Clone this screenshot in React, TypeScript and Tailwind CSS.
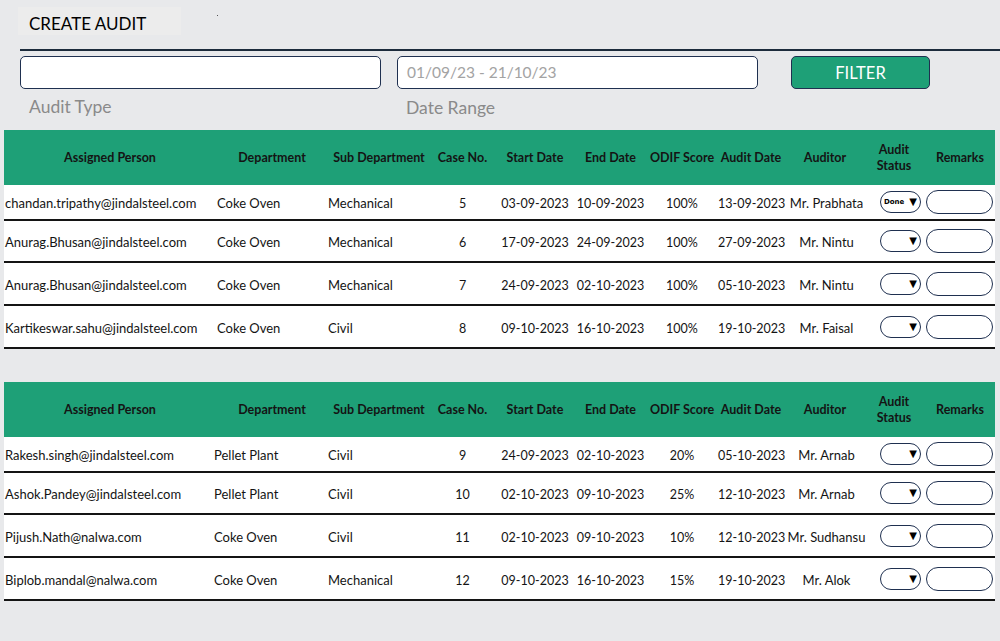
import React from "react";

type Row = {
  person: string;
  dept: string;
  sub: string;
  caseNo: string;
  start: string;
  end: string;
  odif: string;
  audit: string;
  auditor: string;
  status?: string;
};

const table1: Row[] = [
  { person: "chandan.tripathy@jindalsteel.com", dept: "Coke Oven", sub: "Mechanical", caseNo: "5", start: "03-09-2023", end: "10-09-2023", odif: "100%", audit: "13-09-2023", auditor: "Mr. Prabhata", status: "Done" },
  { person: "Anurag.Bhusan@jindalsteel.com", dept: "Coke Oven", sub: "Mechanical", caseNo: "6", start: "17-09-2023", end: "24-09-2023", odif: "100%", audit: "27-09-2023", auditor: "Mr. Nintu" },
  { person: "Anurag.Bhusan@jindalsteel.com", dept: "Coke Oven", sub: "Mechanical", caseNo: "7", start: "24-09-2023", end: "02-10-2023", odif: "100%", audit: "05-10-2023", auditor: "Mr. Nintu" },
  { person: "Kartikeswar.sahu@jindalsteel.com", dept: "Coke Oven", sub: "Civil", caseNo: "8", start: "09-10-2023", end: "16-10-2023", odif: "100%", audit: "19-10-2023", auditor: "Mr. Faisal" },
];

const table2: Row[] = [
  { person: "Rakesh.singh@jindalsteel.com", dept: "Pellet Plant", sub: "Civil", caseNo: "9", start: "24-09-2023", end: "02-10-2023", odif: "20%", audit: "05-10-2023", auditor: "Mr. Arnab" },
  { person: "Ashok.Pandey@jindalsteel.com", dept: "Pellet Plant", sub: "Civil", caseNo: "10", start: "02-10-2023", end: "09-10-2023", odif: "25%", audit: "12-10-2023", auditor: "Mr. Arnab" },
  { person: "Pijush.Nath@nalwa.com", dept: "Coke Oven", sub: "Civil", caseNo: "11", start: "02-10-2023", end: "09-10-2023", odif: "10%", audit: "12-10-2023", auditor: "Mr. Sudhansu" },
  { person: "Biplob.mandal@nalwa.com", dept: "Coke Oven", sub: "Mechanical", caseNo: "12", start: "09-10-2023", end: "16-10-2023", odif: "15%", audit: "19-10-2023", auditor: "Mr. Alok" },
];

const grid =
  "grid grid-cols-[212px_112px_102px_65px_80px_71px_72px_66px_82px_56px_73px]";

const rowHeights = ["h-[34px]", "h-[40px]", "h-[41px]", "h-[41px]"];

function Header() {
  return (
    <div className={`${grid} h-[55px] bg-[#1ea077] items-center text-[12.5px] font-bold text-[#141414] leading-[16px]`}>
      <div className="text-center">Assigned Person</div>
      <div className="text-center">Department</div>
      <div className="text-center">Sub Department</div>
      <div className="text-center">Case No.</div>
      <div className="text-center">Start Date</div>
      <div className="text-center">End Date</div>
      <div className="text-center whitespace-nowrap">ODIF Score</div>
      <div className="text-center whitespace-nowrap">Audit Date</div>
      <div className="text-center">Auditor</div>
      <div className="text-center">
        Audit
        <br />
        Status
      </div>
      <div className="text-center pl-[3px]">Remarks</div>
    </div>
  );
}

function StatusSelect({ value }: { value?: string }) {
  return (
    <div className="flex h-[22px] w-[41px] items-center justify-between rounded-full border border-[#1f3050] bg-white pl-[3px] pr-[3px]">
      <span className="text-[7px] font-bold leading-none text-black" style={{ fontFamily: "'DejaVu Sans', sans-serif" }}>
        {value ?? ""}
      </span>
      <span className="text-[10px] leading-none text-black" style={{ fontFamily: "'DejaVu Sans', sans-serif" }}>▼</span>
    </div>
  );
}

function Table({ rows, deptShift }: { rows: Row[]; deptShift: string }) {
  return (
    <div className="ml-[4px] w-[991px]">
      <Header />
      {rows.map((r, i) => (
        <div
          key={i}
          className={`${grid} ${rowHeights[i]} box-content items-center bg-white border-b-2 border-[#141414] text-[13px] leading-[17px] text-[#141414] whitespace-nowrap`}
        >
          <div className="pt-[3px] pl-[1px]">{r.person}</div>
          <div className={`pt-[3px] ${deptShift}`}>{r.dept}</div>
          <div className="pt-[3px]">{r.sub}</div>
          <div className="pt-[3px] text-center text-[12.5px]">{r.caseNo}</div>
          <div className="pt-[3px] text-center text-[12.5px]">{r.start}</div>
          <div className="pt-[3px] text-center text-[12.5px]">{r.end}</div>
          <div className="pt-[3px] text-center text-[12.5px]">{r.odif}</div>
          <div className="pt-[3px] pr-[2px] text-center text-[12.5px]">{r.audit}</div>
          <div className="pt-[3px] pl-[3px] text-center">{r.auditor}</div>
          <div className="flex justify-end pr-[1px]">
            <StatusSelect value={r.status} />
          </div>
          <div className="pl-[4px]">
            <div className="h-[24px] w-[67px] rounded-full border border-[#1f3050] bg-white" />
          </div>
        </div>
      ))}
    </div>
  );
}

export default function App() {
  return (
    <div
      className="relative h-[641px] w-[1000px] overflow-hidden bg-[#e8e9eb]"
      style={{ fontFamily: "Lato, 'Open Sans', sans-serif" }}
    >
      <div className="absolute left-[217px] top-[15px] h-[1px] w-[1px] bg-[#555]" />
      <div className="pt-[7px] pl-[18px]">
        <div className="h-[28px] w-[163px] bg-[#ececec] pl-[11px] pt-[3px] text-[17px] leading-[28px] text-black">
          CREATE AUDIT
        </div>
      </div>
      <div className="ml-[20px] mt-[14px] h-[2px] bg-[#1c2b3c]" />
      <div className="mt-[5px] flex pl-[20px]">
        <div className="h-[33px] w-[361px] rounded-[5px] border border-[#1f3050] bg-white" />
        <div className="ml-[16px] flex h-[33px] w-[361px] items-center rounded-[5px] border border-[#1f3050] bg-white pl-[9px] pt-[1px] text-[15.5px] text-[#a3a3a3]">
          01/09/23 - 21/10/23
        </div>
        <div className="ml-[33px] flex h-[33px] w-[139px] items-center justify-center rounded-[5px] border border-[#1f3050] bg-[#1ea077] pt-[1px] text-[16.5px] text-white">
          FILTER
        </div>
      </div>
      <div className="mt-[8px] flex pl-[20px] text-[17.5px] leading-[20px] text-[#8a8a8a]">
        <div className="w-[377px] pl-[9px]">Audit Type</div>
        <div className="pl-[9px] pt-[1px]">Date Range</div>
      </div>
      <div className="mt-[12px]">
        <Table rows={table1} deptShift="pl-[1px]" />
      </div>
      <div className="mt-[33px]">
        <Table rows={table2} deptShift="ml-[-2px]" />
      </div>
    </div>
  );
}
